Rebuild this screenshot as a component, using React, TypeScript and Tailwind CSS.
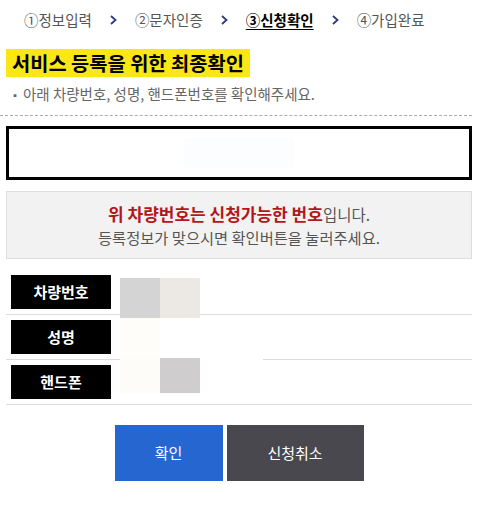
const steps = ["①정보입력", "②문자인증", "③신청확인", "④가입완료"];

const rows = ["차량번호", "성명", "핸드폰"];

const Arrow = () => (
  <span className="w-[43px] flex justify-center">
    <svg width="7" height="10" viewBox="0 0 7 10" fill="none">
      <path d="M1 1l4.5 4L1 9" stroke="#2b3d7a" strokeWidth="1.8" />
    </svg>
  </span>
);

export default function App() {
  return (
    <div
      className="w-[486px] h-[508px] bg-white text-[#333] relative"
      style={{ fontFamily: '"Noto Sans CJK KR", "Noto Sans", sans-serif' }}
    >
      <div className="w-[478px] px-[6px]">
        {/* steps */}
        <div className="flex items-center h-[40px] pl-[18px] text-[14.5px] text-[#555]">
          {steps.map((s, i) => (
            <div key={s} className="flex items-center">
              <span
                className={
                  i === 2
                    ? "font-bold text-black underline underline-offset-[3px]"
                    : ""
                }
              >
                {s}
              </span>
              {i < steps.length - 1 && <Arrow />}
            </div>
          ))}
        </div>

        {/* title */}
        <div className="mt-[9px]">
          <h2 className="inline-block bg-[#fbe716] px-[6px] h-[28px] leading-[28px] text-[19.8px] font-bold text-black">
            서비스 등록을 위한 최종확인
          </h2>
        </div>
        <p className="mt-[7px] pl-[4px] text-[14.5px] text-[#666] leading-[20px]">
          <span className="text-[10px] align-middle mr-[3px]">▪</span>
          아래 차량번호, 성명, 핸드폰번호를 확인해주세요.
        </p>

        <div className="mt-[9px] -mx-[6px] w-[472px] border-t border-dashed border-[#aaa]" />

        {/* result box */}
        <div className="mt-[10px] h-[54px] border-[3px] border-black bg-white flex items-center justify-center">
          <div className="w-[110px] h-[30px] bg-[#fbfdff] rounded" />
        </div>

        {/* notice */}
        <div className="mt-[11px] h-[68px] bg-[#f2f2f2] border border-[#dedede] flex flex-col items-center justify-center">
          <p className="text-[17px] leading-[24px]">
            <span className="font-bold text-[#b3171b]">
              위 차량번호는 신청가능한 번호
            </span>
            <span className="text-[#555] text-[15.5px]">입니다.</span>
          </p>
          <p className="text-[15.3px] leading-[22px] text-[#555]">
            등록정보가 맞으시면 확인버튼을 눌러주세요.
          </p>
        </div>

        {/* rows */}
        <div className="mt-[11px]">
          {rows.map((r) => (
            <div
              key={r}
              className="flex items-center h-[45px] border-b border-[#dcdcdc] px-[5px]"
            >
              <div className="w-[100px] h-[34px] bg-black text-white font-bold text-[15px] flex items-center justify-center">
                {r}
              </div>
            </div>
          ))}
        </div>

        {/* buttons */}
        <div className="mt-[20px] flex justify-center gap-[4px]">
          <button className="w-[108px] h-[56px] bg-[#2666d0] text-white text-[15px]">
            확인
          </button>
          <button className="w-[137px] h-[56px] bg-[#48484e] text-white text-[15px]">
            신청취소
          </button>
        </div>
      </div>

      {/* masked values */}
      <div className="absolute left-[120px] top-[278px] w-[40px] h-[40px] bg-[#d4d4d4]" />
      <div className="absolute left-[160px] top-[278px] w-[40px] h-[40px] bg-[#ece8e4]" />
      <div className="absolute left-[120px] top-[318px] w-[143px] h-[42px] bg-white" />
      <div className="absolute left-[120px] top-[318px] w-[40px] h-[40px] bg-[#fefdf9]" />
      <div className="absolute left-[120px] top-[358px] w-[40px] h-[35px] bg-[#fdfcf8]" />
      <div className="absolute left-[160px] top-[358px] w-[40px] h-[35px] bg-[#cfcdce]" />
    </div>
  );
}
